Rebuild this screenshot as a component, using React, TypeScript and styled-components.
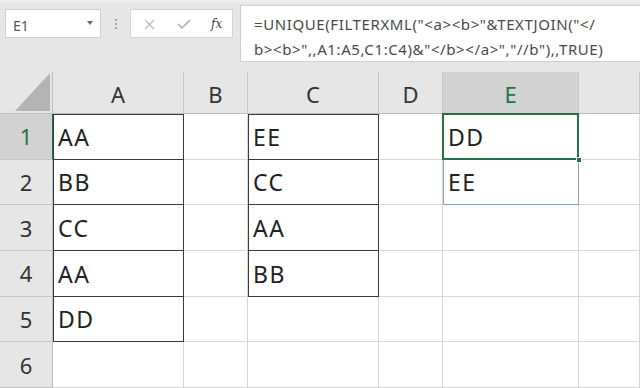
import React from "react";
import styled, { createGlobalStyle, css } from "styled-components";

const GREEN = "#217346";
const GRID = "#d8d8d8";
const DARK = "#3a3a3a";

const GlobalStyle = createGlobalStyle`
  html, body { margin: 0; padding: 0; background: #ffffff; }
  body { font-family: "Noto Sans", "Liberation Sans", sans-serif; }
  * { box-sizing: border-box; }
`;

const Page = styled.div`
  width: 640px;
  height: 388px;
  overflow: hidden;
  display: flex;
  flex-direction: column;
  background: #ffffff;
`;

const FormulaBar = styled.div`
  height: 72px;
  flex: none;
  display: flex;
  align-items: flex-start;
  padding: 5px 0 0 5px;
  background: linear-gradient(#f1f1f1 0, #e6e6e6 4px, #e6e6e6 100%);
`;

const NameBox = styled.div`
  margin-top: 4px;
  width: 96px;
  height: 29px;
  background: #ffffff;
  border: 1px solid #cfcfcf;
  display: flex;
  align-items: center;
  justify-content: space-between;
  padding: 3px 7px 0 7px;
  font-size: 14px;
  color: #555;
`;

const Caret = styled.span`
  width: 0;
  height: 0;
  border-left: 3.5px solid transparent;
  border-right: 3.5px solid transparent;
  border-top: 4px solid #666;
  margin-top: -4px;
`;

const Grip = styled.div`
  width: 29px;
  height: 33px;
  display: flex;
  flex-direction: column;
  align-items: center;
  justify-content: center;
  gap: 2px;
  padding-top: 4px;
`;

const Dot = styled.span`
  width: 2px;
  height: 2px;
  background: #a8a8a8;
`;

const FxBox = styled.div`
  margin-top: 4px;
  width: 103px;
  height: 29px;
  background: #ffffff;
  border: 1px solid #d4d4d4;
  display: flex;
  align-items: center;
  padding: 1px 0 0 13px;
  gap: 22px;
`;

const FxLabel = styled.span`
  font-family: "DejaVu Serif", "Liberation Serif", serif;
  font-style: italic;
  font-size: 12px;
  color: #444;
  margin-left: -2px;
`;

const FormulaInput = styled.div`
  margin-left: 7px;
  flex: 1;
  height: 57px;
  background: #ffffff;
  border: 1px solid #cfcfcf;
  border-right: none;
  padding: 6px 0 0 13px;
  font-size: 15px;
  letter-spacing: 0.6px;
  line-height: 25px;
  color: #4a4a4a;
`;

const FormulaLine = styled.div`
  white-space: nowrap;
`;

const Sheet = styled.div`
  flex: 1;
  display: grid;
  grid-template-columns: 53px 131px 64px 131px 64px 136px 61px;
  grid-template-rows: 42px repeat(6, 45.67px);
  font-family: "Noto Sans", "Liberation Sans", sans-serif;
`;

const Corner = styled.div`
  background: #e6e6e6;
  border-right: 1px solid #bdbdbd;
  border-bottom: 1px solid #bdbdbd;
  display: flex;
  align-items: flex-end;
  justify-content: flex-end;
  padding: 0 2px 2px 0;
`;

const CornerTriangle = styled.div`
  width: 35px;
  height: 38px;
  background: #b4b4b4;
  clip-path: polygon(100% 0, 100% 100%, 0 100%);
`;

const ColHeader = styled.div<{ $selected?: boolean }>`
  background: ${(p) => (p.$selected ? "#d2d2d2" : "#e6e6e6")};
  border-right: 1px solid #c6c6c6;
  border-bottom: 1px solid ${(p) => (p.$selected ? GREEN : "#bdbdbd")};
  color: ${(p) => (p.$selected ? GREEN : "#333")};
  display: flex;
  align-items: center;
  justify-content: center;
  font-size: 22px;
  padding-top: 2px;
`;

const RowHeader = styled.div<{ $selected?: boolean }>`
  background: ${(p) => (p.$selected ? "#d2d2d2" : "#e6e6e6")};
  border-right: 1px solid ${(p) => (p.$selected ? GREEN : "#bdbdbd")};
  border-bottom: 1px solid #c6c6c6;
  color: ${(p) => (p.$selected ? GREEN : "#333")};
  display: flex;
  align-items: center;
  justify-content: center;
  font-size: 22px;
`;

const Cell = styled.div<{
  $boxed?: boolean;
  $boxTop?: boolean;
  $active?: boolean;
  $spill?: boolean;
}>`
  position: relative;
  border-right: 1px solid ${GRID};
  border-bottom: 1px solid ${GRID};
  display: flex;
  align-items: center;
  padding: 1px 0 0 5px;
  font-size: 23px;
  letter-spacing: 1.5px;
  color: #222;
  background: #ffffff;
  ${(p) =>
    p.$boxed &&
    css`
      border-right-color: ${DARK};
      border-bottom-color: ${DARK};
      box-shadow: inset 1px ${p.$boxTop ? "1px" : "0"} 0 ${DARK};
    `}
  ${(p) =>
    p.$spill &&
    css`
      border-right-color: #8da4c0;
      border-bottom-color: #8da4c0;
      box-shadow: inset 1px 0 0 #8da4c0;
    `}
  ${(p) =>
    p.$active &&
    css`
      &::after {
        content: "";
        position: absolute;
        top: -1px;
        left: -1px;
        right: -1px;
        bottom: -1px;
        border: 2px solid ${GREEN};
        pointer-events: none;
      }
    `}
`;

const FillHandle = styled.span`
  position: absolute;
  right: -4px;
  bottom: -4px;
  width: 6px;
  height: 6px;
  background: ${GREEN};
  border: 1px solid #ffffff;
  z-index: 2;
`;

const columns = ["A", "B", "C", "D", "E", ""];

const colA = ["AA", "BB", "CC", "AA", "DD"];
const colC = ["EE", "CC", "AA", "BB"];
const colE = ["DD", "EE"];

const XIcon = () => (
  <svg width="11" height="11" viewBox="0 0 11 11">
    <path d="M1 1 L10 10 M10 1 L1 10" stroke="#bdbdbd" strokeWidth="1.3" fill="none" />
  </svg>
);

const CheckIcon = () => (
  <svg width="14" height="10" viewBox="0 0 14 10">
    <path d="M1 5 L5 9 L13 1" stroke="#bdbdbd" strokeWidth="1.8" fill="none" />
  </svg>
);

export default function App() {
  const rows = [1, 2, 3, 4, 5, 6];
  return (
    <>
      <GlobalStyle />
      <Page>
        <FormulaBar>
          <NameBox>
            <span>E1</span>
            <Caret />
          </NameBox>
          <Grip>
            <Dot />
            <Dot />
            <Dot />
          </Grip>
          <FxBox>
            <XIcon />
            <CheckIcon />
            <FxLabel>fx</FxLabel>
          </FxBox>
          <FormulaInput>
            <FormulaLine>=UNIQUE(FILTERXML("&lt;a&gt;&lt;b&gt;"&amp;TEXTJOIN("&lt;/</FormulaLine>
            <FormulaLine>b&gt;&lt;b&gt;",,A1:A5,C1:C4)&amp;"&lt;/b&gt;&lt;/a&gt;","//b"),,TRUE)</FormulaLine>
          </FormulaInput>
        </FormulaBar>
        <Sheet>
          <Corner>
            <CornerTriangle />
          </Corner>
          {columns.map((c, idx) => (
            <ColHeader key={idx} $selected={c === "E"}>
              {c}
            </ColHeader>
          ))}
          {rows.map((r) => {
            const i = r - 1;
            return (
              <React.Fragment key={r}>
                <RowHeader $selected={r === 1}>{r}</RowHeader>
                <Cell $boxed={i < colA.length} $boxTop={i === 0}>
                  {colA[i] ?? ""}
                </Cell>
                <Cell />
                <Cell $boxed={i < colC.length} $boxTop={i === 0}>
                  {colC[i] ?? ""}
                </Cell>
                <Cell />
                <Cell $active={r === 1} $spill={r === 2}>
                  {colE[i] ?? ""}
                  {r === 1 && <FillHandle />}
                </Cell>
                <Cell />
              </React.Fragment>
            );
          })}
        </Sheet>
      </Page>
    </>
  );
}
